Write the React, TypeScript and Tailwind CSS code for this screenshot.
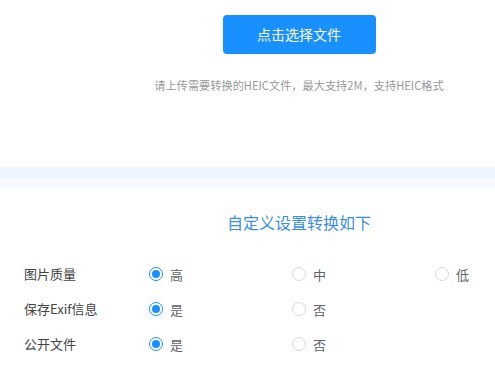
import { useState } from "react"

type Option = { label: string; value: string }

const rows: { label: string; options: Option[]; initial: string }[] = [
  {
    label: "图片质量",
    options: [
      { label: "高", value: "high" },
      { label: "中", value: "mid" },
      { label: "低", value: "low" },
    ],
    initial: "high",
  },
  {
    label: "保存Exif信息",
    options: [
      { label: "是", value: "yes" },
      { label: "否", value: "no" },
    ],
    initial: "yes",
  },
  {
    label: "公开文件",
    options: [
      { label: "是", value: "yes" },
      { label: "否", value: "no" },
    ],
    initial: "yes",
  },
]

function Radio({ checked, label, onClick }: { checked: boolean; label: string; onClick: () => void }) {
  return (
    <button type="button" onClick={onClick} className="flex items-center gap-[7px] text-[13px] text-[#606266]">
      <span
        className={
          checked
            ? "grid size-[14px] place-items-center rounded-full border border-[#1890ff] bg-white"
            : "size-[14px] rounded-full border border-[#d9d9d9] bg-white"
        }
      >
        {checked ? <span className="size-[8px] rounded-full bg-[#1890ff]" /> : null}
      </span>
      <span className="leading-none">{label}</span>
    </button>
  )
}

export default function App() {
  const [values, setValues] = useState<string[]>(rows.map((r) => r.initial))

  return (
    <div
      className="h-[377px] w-[495px] overflow-hidden bg-white"
      style={{ fontFamily: '"Noto Sans CJK SC", "Noto Sans", sans-serif' }}
    >
      <div className="flex w-[598px] flex-col items-center pt-[15px]">
        <button
          type="button"
          className="h-[39px] w-[153px] rounded-[4px] bg-[#1890ff] text-[14px] text-white"
        >
          点击选择文件
        </button>
        <p className="mt-[23px] text-[11.2px] leading-[16px] text-[#999999]">
          请上传需要转换的HEIC文件，最大支持2M，支持HEIC格式
        </p>
      </div>

      <div className="mt-[74px] h-[11px] bg-[#edf5fe]" />
      <div className="h-[10px] bg-[#f6fafe]" />

      <div className="flex w-[598px] justify-center pt-[24px]">
        <h2 className="text-[16px] leading-[20px] text-[#3a8ee6]">自定义设置转换如下</h2>
      </div>

      <div className="mt-[35px] flex w-[598px] flex-col gap-[21px] pl-[24px]">
        {rows.map((row, i) => (
          <div key={row.label} className="flex h-[14px] items-center">
            <div className="w-[125px] shrink-0 text-[13px] text-[#444444]">{row.label}</div>
            {row.options.map((opt) => (
              <div key={opt.value} className="w-[143px] shrink-0">
                <Radio
                  checked={values[i] === opt.value}
                  label={opt.label}
                  onClick={() => setValues((v) => v.map((x, j) => (j === i ? opt.value : x)))}
                />
              </div>
            ))}
          </div>
        ))}
      </div>
    </div>
  )
}
